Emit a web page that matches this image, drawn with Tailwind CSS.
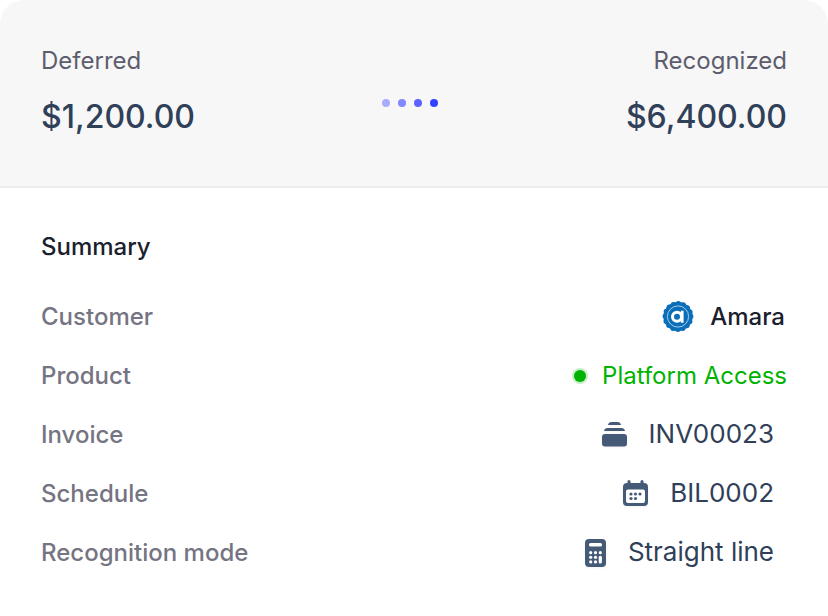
<!DOCTYPE html>
<html lang="en">
<head>
    <meta charset="UTF-8">
    <meta name="viewport" content="width=device-width, initial-scale=1.0">
    <title>Revenue Summary</title>

    <!--  Styles  -->
    <script src="https://cdn.jsdelivr.net/npm/@tailwindcss/browser@4"></script>
</head>

<body class="bg-white font-['Inter',sans-serif]">
    <main class="w-full overflow-hidden rounded-t-3xl bg-white">
        <!-- Totals -->
        <header class="flex items-center justify-between border-b-2 border-[#ededee] bg-[#f7f7f7] px-[41px] pt-[45px] pb-[49px]">
            <div>
                <h2 class="text-2xl leading-8 text-[#5e5d6d]">Deferred</h2>
                <p class="mt-5 text-[32px] leading-10 font-medium text-[#2f4058]">$1,200.00</p>
            </div>
            <div class="mt-6 flex gap-2" aria-hidden="true">
                <span class="size-2 rounded-full bg-[#a8acff]"></span>
                <span class="size-2 rounded-full bg-[#8288ff]"></span>
                <span class="size-2 rounded-full bg-[#5b64ff]"></span>
                <span class="size-2 rounded-full bg-[#3440ff]"></span>
            </div>
            <div class="text-right">
                <h2 class="text-2xl leading-8 text-[#5e5d6d]">Recognized</h2>
                <p class="mt-5 text-[32px] leading-10 font-medium text-[#2f4058]">$6,400.00</p>
            </div>
        </header>

        <!-- Summary -->
        <section class="px-[41px] pt-[43px] pb-8">
            <h1 class="text-2xl leading-8 font-medium text-[#1a202c]">Summary</h1>
            <dl class="mt-6 text-2xl">
                <div class="flex h-[59px] items-center justify-between">
                    <dt class="font-medium text-[#757482]">Customer</dt>
                    <dd class="flex items-center gap-4 pr-[2px] font-medium text-[#1a202c]">
                        <svg class="size-8" viewBox="0 0 32 32" fill="none" aria-hidden="true">
                            <circle cx="16" cy="15.500" r="14.600" fill="#0a6fb8"/>
                            <circle cx="16" cy="15.500" r="12.700" stroke="#0a6fb8" stroke-width="5.400" stroke-linecap="round" stroke-dasharray="0 4.987"/>
                            <circle cx="16" cy="15.500" r="10.600" stroke="#b5d6ec" stroke-width=".9"/>
                            <circle cx="15" cy="15.700" r="4.500" stroke="#fff" stroke-width="3"/>
                            <path d="M20.200 9.700v12" stroke="#fff" stroke-width="2.800"/>
                        </svg>
                        Amara
                    </dd>
                </div>
                <div class="flex h-[59px] items-center justify-between">
                    <dt class="font-medium text-[#757482]">Product</dt>
                    <dd class="flex items-center gap-4 text-[#00b300]">
                        <span class="size-3 rounded-full bg-[#00b300] ring-2 ring-[#c5eec5]"></span>
                        Platform Access
                    </dd>
                </div>
                <div class="flex h-[59px] items-center justify-between">
                    <dt class="font-medium text-[#757482]">Invoice</dt>
                    <dd class="flex items-center gap-[22px] pr-[13px] text-[26px] text-[#2f4058]">
                        <svg class="h-7 w-[25px] drop-shadow-xs" viewBox="0 0 25 28" fill="#445a76" aria-hidden="true">
                            <path d="M6 4c.4-1.700 1.500-3 3.500-3h6c2 0 3.100 1.300 3.500 3z"/>
                            <path d="M2 10c.4-1.800 1.600-3 3.600-3h13.800c2 0 3.200 1.200 3.600 3z"/>
                            <rect y="13" width="25" height="12.500" rx="3"/>
                        </svg>
                        INV00023
                    </dd>
                </div>
                <div class="flex h-[59px] items-center justify-between">
                    <dt class="font-medium text-[#757482]">Schedule</dt>
                    <dd class="flex items-center gap-[22px] pr-[13px] text-[26px] text-[#2f4058]">
                        <svg class="h-7 w-[25px] drop-shadow-xs" viewBox="0 1 25 28" fill="#445a76" aria-hidden="true">
                            <rect x="4.500" y="1" width="3" height="7" rx="1.500"/>
                            <rect x="17.500" y="1" width="3" height="7" rx="1.500"/>
                            <rect y="4" width="25" height="23" rx="4"/>
                            <rect x="3" y="10.500" width="19" height="13.500" rx="2" fill="#fff"/>
                            <circle cx="8" cy="15" r="1.600"/>
                            <circle cx="12.500" cy="15" r="1.600"/>
                            <circle cx="17" cy="15" r="1.600"/>
                            <circle cx="8" cy="19.500" r="1.600"/>
                            <circle cx="12.500" cy="19.500" r="1.600"/>
                        </svg>
                        BIL0002
                    </dd>
                </div>
                <div class="flex h-[59px] items-center justify-between">
                    <dt class="font-medium text-[#757482]">Recognition mode</dt>
                    <dd class="flex items-center gap-[22px] pr-[13px] text-[26px] text-[#2f4058]">
                        <svg class="h-7 w-[21px] drop-shadow-xs" viewBox="0 0 21 28" fill="#445a76" aria-hidden="true">
                            <rect width="21" height="28" rx="4"/>
                            <g fill="#fff">
                                <rect x="4" y="4" width="13" height="3.500" rx="1.500"/>
                                <circle cx="5.700" cy="13.700" r="1.600"/>
                                <circle cx="10.500" cy="13.700" r="1.600"/>
                                <circle cx="15.300" cy="13.700" r="1.600"/>
                                <circle cx="5.700" cy="18.300" r="1.600"/>
                                <circle cx="10.500" cy="18.300" r="1.600"/>
                                <circle cx="5.700" cy="22.900" r="1.600"/>
                                <circle cx="10.500" cy="22.900" r="1.600"/>
                                <rect x="13.700" y="16.700" width="3.200" height="7.800" rx="1.500"/>
                            </g>
                        </svg>
                        Straight line
                    </dd>
                </div>
            </dl>
        </section>
    </main>
</body>
</html>
